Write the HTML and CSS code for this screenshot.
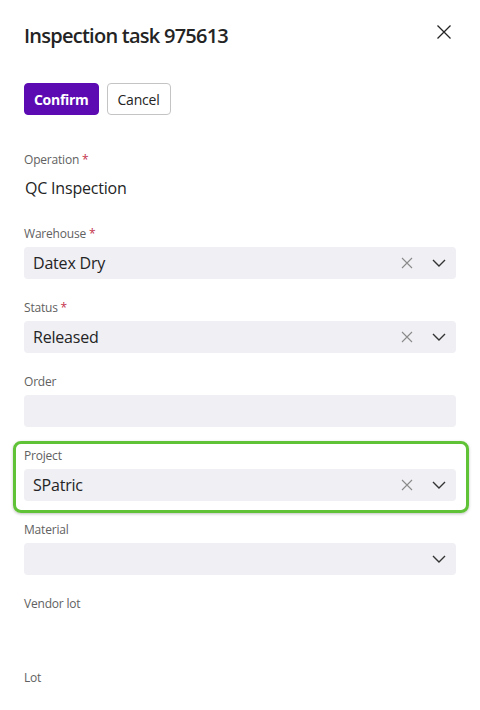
FILE: index.html
```html
<!DOCTYPE html>
<html>
<head>
<meta charset="utf-8">
<link rel="stylesheet" href="styles.css">
</head>
<body>
<div class="panel">
  <div class="header">
    <h1 class="title">Inspection task 975613</h1>
    <button class="close" aria-label="Close">
      <svg width="16" height="16" viewBox="0 0 16 16"><path d="M1.5 1.5 L14.5 14.5 M14.5 1.5 L1.5 14.5" stroke="#242424" stroke-width="1.3" fill="none"/></svg>
    </button>
  </div>
  <div class="actions">
    <button class="btn primary">Confirm</button>
    <button class="btn secondary">Cancel</button>
  </div>
  <div class="fields">
    <div class="field">
      <div class="label">Operation <span class="req">*</span></div>
      <div class="display">QC Inspection</div>
    </div>
    <div class="field">
      <div class="label">Warehouse <span class="req">*</span></div>
      <div class="input">
        <span class="value">Datex Dry</span>
        <span class="clear"><svg width="12" height="12" viewBox="0 0 12 12"><path d="M1 1 L11 11 M11 1 L1 11" stroke="#8a8a8a" stroke-width="1.1" fill="none"/></svg></span>
        <span class="chev"><svg width="14" height="8" viewBox="0 0 14 8"><path d="M1 1 L7 7 L13 1" stroke="#333" stroke-width="1.4" fill="none"/></svg></span>
      </div>
    </div>
    <div class="field">
      <div class="label">Status <span class="req">*</span></div>
      <div class="input">
        <span class="value">Released</span>
        <span class="clear"><svg width="12" height="12" viewBox="0 0 12 12"><path d="M1 1 L11 11 M11 1 L1 11" stroke="#8a8a8a" stroke-width="1.1" fill="none"/></svg></span>
        <span class="chev"><svg width="14" height="8" viewBox="0 0 14 8"><path d="M1 1 L7 7 L13 1" stroke="#333" stroke-width="1.4" fill="none"/></svg></span>
      </div>
    </div>
    <div class="field">
      <div class="label">Order</div>
      <div class="input"></div>
    </div>
    <div class="field highlight">
      <div class="label">Project</div>
      <div class="input">
        <span class="value">SPatric</span>
        <span class="clear"><svg width="12" height="12" viewBox="0 0 12 12"><path d="M1 1 L11 11 M11 1 L1 11" stroke="#8a8a8a" stroke-width="1.1" fill="none"/></svg></span>
        <span class="chev"><svg width="14" height="8" viewBox="0 0 14 8"><path d="M1 1 L7 7 L13 1" stroke="#333" stroke-width="1.4" fill="none"/></svg></span>
      </div>
    </div>
    <div class="field">
      <div class="label">Material</div>
      <div class="input">
        <span class="value"></span>
        <span class="chev"><svg width="14" height="8" viewBox="0 0 14 8"><path d="M1 1 L7 7 L13 1" stroke="#333" stroke-width="1.4" fill="none"/></svg></span>
      </div>
    </div>
    <div class="field">
      <div class="label">Vendor lot</div>
      <div class="display"></div>
    </div>
    <div class="field">
      <div class="label">Lot</div>
      <div class="display"></div>
    </div>
  </div>
</div>
</body>
</html>
```
FILE: styles.css
```css
* { box-sizing: border-box; }
html, body { margin: 0; padding: 0; background: #fff; }
body {
  font-family: "Open Sans", "Noto Sans", sans-serif;
  color: #242424;
  overflow: hidden;
}
.panel { padding: 20px 24px 0 24px; }
.header {
  display: flex;
  align-items: center;
  justify-content: space-between;
  height: 32px;
}
.title {
  margin: 0;
  font-size: 20px;
  font-weight: 600;
  line-height: 32px;
  letter-spacing: -0.75px;
}
.close {
  border: 0;
  background: none;
  padding: 0;
  width: 16px;
  height: 16px;
  margin-right: 4px;
  margin-top: -8px;
  display: flex;
}
.actions {
  display: flex;
  gap: 8px;
  margin-top: 31px;
}
.btn {
  height: 32px;
  border-radius: 4px;
  font-family: inherit;
  font-size: 14px;
  padding: 0 10px;
  cursor: pointer;
}
.primary {
  background: #5c0bb3;
  border: 1px solid #5c0bb3;
  color: #fff;
  font-weight: 700;
  padding: 0 9px;
  letter-spacing: -0.3px;
}
.secondary {
  background: #fff;
  border: 1px solid #c4c4c4;
  color: #242424;
  letter-spacing: -0.2px;
}
.fields {
  display: flex;
  flex-direction: column;
  gap: 21px;
  margin-top: 37px;
}
.field { position: relative; }
.label {
  font-size: 12px;
  line-height: 16px;
  color: #616161;
  margin-bottom: 5px;
  letter-spacing: -0.2px;
}
.req { color: #c4314b; }
.display {
  height: 32px;
  font-size: 16px;
  line-height: 30px;
  padding-left: 1px;
  letter-spacing: -0.2px;
}
.input {
  height: 32px;
  background: #efeff4;
  border-radius: 4px;
  display: flex;
  align-items: center;
  padding: 0 10px 0 9px;
  font-size: 16px;
  letter-spacing: -0.2px;
}
.value { flex: 1; }
.clear {
  display: flex;
  margin-right: 19px;
}
.chev { display: flex; }
.highlight::after {
  content: "";
  position: absolute;
  top: -7px;
  left: -11px;
  right: -13px;
  bottom: -12px;
  border: 3px solid #60c236;
  border-radius: 8px;
  box-shadow: 0 1px 3px rgba(0,0,0,0.25);
  pointer-events: none;
}
```
